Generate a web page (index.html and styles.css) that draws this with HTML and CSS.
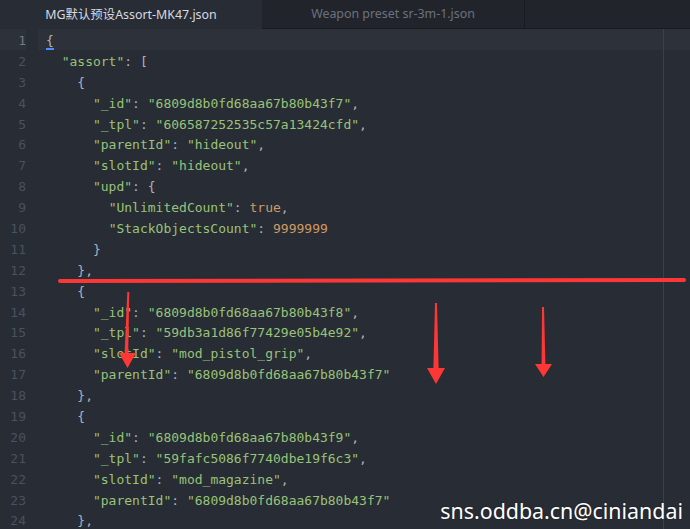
FILE: index.html
```html
<!DOCTYPE html>
<html lang="en">
<head>
    <meta charset="UTF-8">
    <title>Assort-MK47.json</title>
    <link rel="stylesheet" href="styles.css">
</head>
<body>
    <div class="window">
        <div class="tab-bar">
            <div class="tab active">MG默认预设Assort-MK47.json</div>
            <div class="tab">Weapon preset sr-3m-1.json</div>
        </div>

        <div class="editor">
            <div class="gutter">
                <div class="ln current">1</div><div class="ln">2</div><div class="ln">3</div><div class="ln">4</div>
                <div class="ln">5</div><div class="ln">6</div><div class="ln">7</div><div class="ln">8</div>
                <div class="ln">9</div><div class="ln">10</div><div class="ln">11</div><div class="ln">12</div>
                <div class="ln">13</div><div class="ln">14</div><div class="ln">15</div><div class="ln">16</div>
                <div class="ln">17</div><div class="ln">18</div><div class="ln">19</div><div class="ln">20</div>
                <div class="ln">21</div><div class="ln">22</div><div class="ln">23</div><div class="ln">24</div>
            </div>
            <div class="code">
                <div class="line current"><span class="p bracket-match">{</span></div>
                <div class="line">  <span class="s">"assort"</span><span class="p">: [</span></div>
                <div class="line">    <span class="p">{</span></div>
                <div class="line">      <span class="s">"_id"</span><span class="p">: </span><span class="s">"6809d8b0fd68aa67b80b43f7"</span><span class="p">,</span></div>
                <div class="line">      <span class="s">"_tpl"</span><span class="p">: </span><span class="s">"606587252535c57a13424cfd"</span><span class="p">,</span></div>
                <div class="line">      <span class="s">"parentId"</span><span class="p">: </span><span class="s">"hideout"</span><span class="p">,</span></div>
                <div class="line">      <span class="s">"slotId"</span><span class="p">: </span><span class="s">"hideout"</span><span class="p">,</span></div>
                <div class="line">      <span class="s">"upd"</span><span class="p">: {</span></div>
                <div class="line">        <span class="s">"UnlimitedCount"</span><span class="p">: </span><span class="n">true</span><span class="p">,</span></div>
                <div class="line">        <span class="s">"StackObjectsCount"</span><span class="p">: </span><span class="n">9999999</span></div>
                <div class="line">      <span class="p">}</span></div>
                <div class="line">    <span class="p">},</span></div>
                <div class="line">    <span class="p">{</span></div>
                <div class="line">      <span class="s">"_id"</span><span class="p">: </span><span class="s">"6809d8b0fd68aa67b80b43f8"</span><span class="p">,</span></div>
                <div class="line">      <span class="s">"_tpl"</span><span class="p">: </span><span class="s">"59db3a1d86f77429e05b4e92"</span><span class="p">,</span></div>
                <div class="line">      <span class="s">"slotId"</span><span class="p">: </span><span class="s">"mod_pistol_grip"</span><span class="p">,</span></div>
                <div class="line">      <span class="s">"parentId"</span><span class="p">: </span><span class="s">"6809d8b0fd68aa67b80b43f7"</span></div>
                <div class="line">    <span class="p">},</span></div>
                <div class="line">    <span class="p">{</span></div>
                <div class="line">      <span class="s">"_id"</span><span class="p">: </span><span class="s">"6809d8b0fd68aa67b80b43f9"</span><span class="p">,</span></div>
                <div class="line">      <span class="s">"_tpl"</span><span class="p">: </span><span class="s">"59fafc5086f7740dbe19f6c3"</span><span class="p">,</span></div>
                <div class="line">      <span class="s">"slotId"</span><span class="p">: </span><span class="s">"mod_magazine"</span><span class="p">,</span></div>
                <div class="line">      <span class="s">"parentId"</span><span class="p">: </span><span class="s">"6809d8b0fd68aa67b80b43f7"</span></div>
                <div class="line">    <span class="p">},</span></div>
            </div>
            <div class="wrap-guide"></div>
        </div>

        <!-- hand-drawn annotations on top of the screenshot -->
        <svg class="marks" width="690" height="529" viewBox="0 0 690 529">
            <path d="M60 281 L684 280" stroke="#fd3636" stroke-width="4" stroke-linecap="round" fill="none"/>
            <polygon points="127.3,292 129.3,292 128.2,353 136,353 127.5,368 119,353 124.6,353" fill="#fd3636"/>
            <polygon points="435,303 437,303 438.6,368 445,368 436,384 427,368 433.4,368" fill="#fd3636"/>
            <polygon points="542,307 544,307 545.4,364 552,364 543.5,377 535,364 541.6,364" fill="#fd3636"/>
        </svg>

        <div class="watermark">sns.oddba.cn@ciniandai</div>
    </div>
</body>
</html>
```

FILE: styles.css
```css
* {
    margin: 0;
    padding: 0;
    box-sizing: border-box;
}

body {
    background-color: #282c34;
    width: 690px;
    height: 529px;
    overflow: hidden;
}

.window {
    position: relative;
    width: 690px;
    height: 529px;
    background-color: #282c34;
}

/* Tabs */
.tab-bar {
    display: flex;
    height: 29px;
    background-color: #21252b;
    border-bottom: 1px solid #181a1f;
}

.tab {
    width: 263px;
    display: flex;
    align-items: center;
    justify-content: center;
    font-family: "Noto Sans", "Noto Sans CJK SC", sans-serif;
    font-size: 12.4px;
    color: #6b717d;
    border-right: 1px solid #181a1f;
    padding-bottom: 1px;
}

.tab.active {
    width: 262px;
    background-color: #282c34;
    color: #d7dae0;
    border-right: none;
    height: 29px;
}

/* Editor */
.editor {
    position: relative;
    display: flex;
    font-family: "DejaVu Sans Mono", monospace;
    font-size: 13px;
    line-height: 20.9px;
}

.gutter {
    width: 38px;
    padding-right: 12px;
    text-align: right;
    color: #495162;
}

.ln {
    height: 20.9px;
    padding-top: 2px;
}

.ln.current {
    background-color: #2c313a;
    color: #737984;
}

.code {
    flex: 1;
    color: #abb2bf;
}

.line {
    padding-left: 8px;
    padding-top: 2px;
    white-space: pre;
    height: 20.9px;
}

.line.current {
    background-color: #2c313a;
}

.s {
    color: #98c379;
}

.n {
    color: #d19a66;
}

.p {
    color: #abb2bf;
}

.bracket-match {
    border-bottom: 2px solid #528bff;
}

.wrap-guide {
    position: absolute;
    top: 0;
    left: 663px;
    width: 1px;
    height: 520px;
    background-color: #3b4048;
}

/* Overlays */
.marks {
    position: absolute;
    top: 0;
    left: 0;
}

.watermark {
    position: absolute;
    right: 7px;
    bottom: 4px;
    font-family: "Noto Sans", sans-serif;
    font-size: 21.4px;
    color: #ffffff;
    text-shadow: 0 0 2px rgba(0, 0, 0, 0.4);
}
```
